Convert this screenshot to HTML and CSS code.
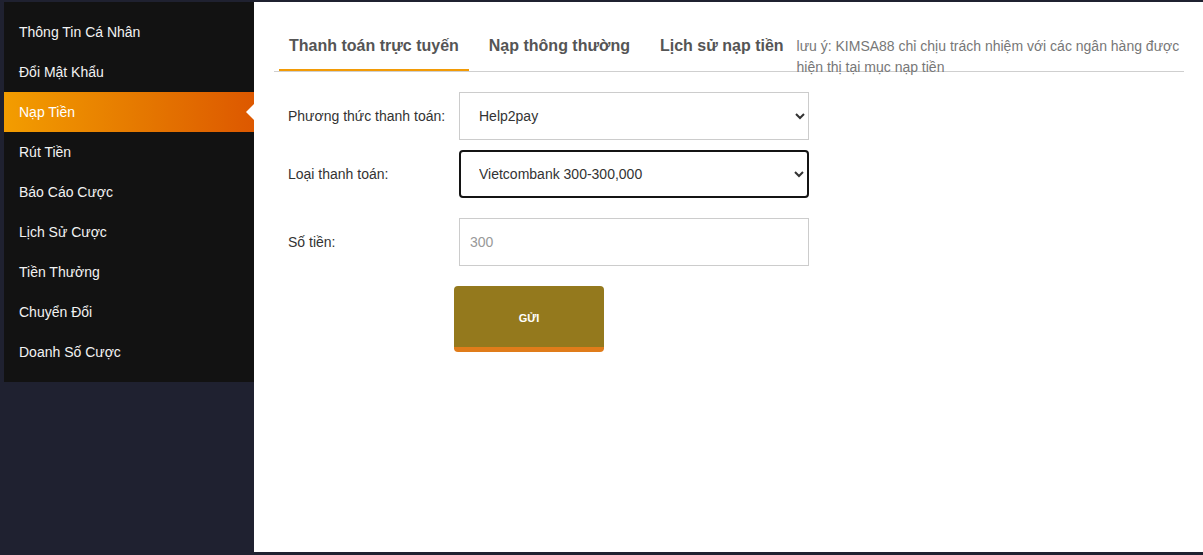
FILE: index.html
```html
<!DOCTYPE html>
<html lang="vi">

    <head>
        <meta charset="UTF-8">
        <meta name="viewport" content="width=device-width, initial-scale=1.0">
        <title>Nạp Tiền</title>
        <link rel="stylesheet" href="styles.css">
    </head>

    <body>
        <div class="page">
            <nav class="side">
                <ul role="list" class="side_menu">
                    <li class="side_item">Thông Tin Cá Nhân</li>
                    <li class="side_item">Đổi Mật Khẩu</li>
                    <li class="side_item side_item--active">Nạp Tiền</li>
                    <li class="side_item">Rút Tiền</li>
                    <li class="side_item">Báo Cáo Cược</li>
                    <li class="side_item">Lịch Sử Cược</li>
                    <li class="side_item">Tiền Thưởng</li>
                    <li class="side_item">Chuyển Đổi</li>
                    <li class="side_item">Doanh Số Cược</li>
                </ul>
            </nav>

            <main class="panel">
                <div class="tabs">
                    <div class="tabs_tab tabs_tab--active">Thanh toán trực tuyến</div>
                    <div class="tabs_tab">Nạp thông thường</div>
                    <div class="tabs_tab">Lịch sử nạp tiền</div>
                    <p class="tabs_note">lưu ý: KIMSA88 chỉ chịu trách nhiệm với các ngân hàng được hiện thị tại mục nạp tiền</p>
                </div>

                <form class="form">
                    <div class="form_row form_row--tight">
                        <label class="form_label">Phương thức thanh toán:</label>
                        <select class="form_field form_select">
                            <option>Help2pay</option>
                        </select>
                    </div>
                    <div class="form_row">
                        <label class="form_label">Loại thanh toán:</label>
                        <select class="form_field form_select form_field--focus">
                            <option>Vietcombank 300-300,000</option>
                        </select>
                    </div>
                    <div class="form_row">
                        <label class="form_label">Số tiền:</label>
                        <input class="form_field form_input" type="text" placeholder="300">
                    </div>
                    <div class="form_actions">
                        <button type="button" class="btn">GỬI</button>
                    </div>
                </form>
            </main>
        </div>
    </body>

</html>
```

FILE: styles.css
```css
* {
    box-sizing: border-box;
    margin: 0;
    padding: 0;
}

html,
body {
    height: 100%;
}

body {
    font-family: "Liberation Sans", Arial, sans-serif;
    font-size: 14px;
    background-color: #1f2130;
    color: #333;
}

ul {
    list-style: none;
}

.page {
    display: flex;
    align-items: flex-start;
    padding: 2px 0 3px 4px;
    height: 100%;
}

/* sidebar */
.side {
    width: 250px;
    flex: none;
    background-color: #121212;
    padding: 10px 0;
}

.side_item {
    position: relative;
    height: 40px;
    line-height: 40px;
    padding-left: 15px;
    color: #f2f2f2;
}

.side_item--active {
    color: #fff;
    background: linear-gradient(90deg, #f39d00 0%, #e57800 55%, #dd5800 100%);
}

.side_item--active::after {
    content: "";
    position: absolute;
    right: 0;
    top: 50%;
    margin-top: -8px;
    border-top: 8px solid transparent;
    border-bottom: 8px solid transparent;
    border-right: 8px solid #fff;
}

/* content */
.panel {
    flex: 1;
    align-self: stretch;
    background-color: #fff;
    padding: 20px 19px 0 20px;
}

.tabs {
    display: flex;
    height: 50px;
    border-bottom: 1px solid #cfcfcf;
    padding-left: 5px;
}

.tabs_tab {
    height: 100%;
    padding: 14px 10px 0;
    margin-right: 10px;
    font-size: 16px;
    line-height: 20px;
    font-weight: bold;
    color: #555;
    border-bottom: 2px solid transparent;
    white-space: nowrap;
}

.tabs_tab--active {
    border-bottom-color: #f29b06;
}

.tabs_note {
    flex: 1;
    margin-left: -7px;
    padding-top: 14px;
    line-height: 21px;
    color: #777;
}

.form {
    padding: 20px 0 0 14px;
}

.form_row {
    display: flex;
    align-items: center;
    margin-bottom: 20px;
}

.form_row--tight {
    margin-bottom: 10px;
}

.form_label {
    width: 171px;
    flex: none;
    color: #333;
}

.form_field {
    width: 350px;
    height: 48px;
    border: 1px solid #ccc;
    border-radius: 0;
    background-color: #fff;
    font-family: inherit;
    font-size: 14px;
    color: #333;
    outline: none;
}

.form_select {
    padding: 0 4px 0 15px;
}

.form_field--focus {
    border: 2px solid #141414;
    border-radius: 4px;
    padding-left: 14px;
}

.form_input {
    padding: 0 10px;
}

.form_input::placeholder {
    color: #999;
}

.form_actions {
    padding-left: 166px;
}

.btn {
    width: 150px;
    height: 66px;
    border: none;
    border-bottom: 5px solid #e07c1a;
    border-radius: 4px;
    background-color: #94791d;
    color: #fff;
    font-family: inherit;
    font-size: 11px;
    font-weight: bold;
    padding-top: 2px;
}
```
